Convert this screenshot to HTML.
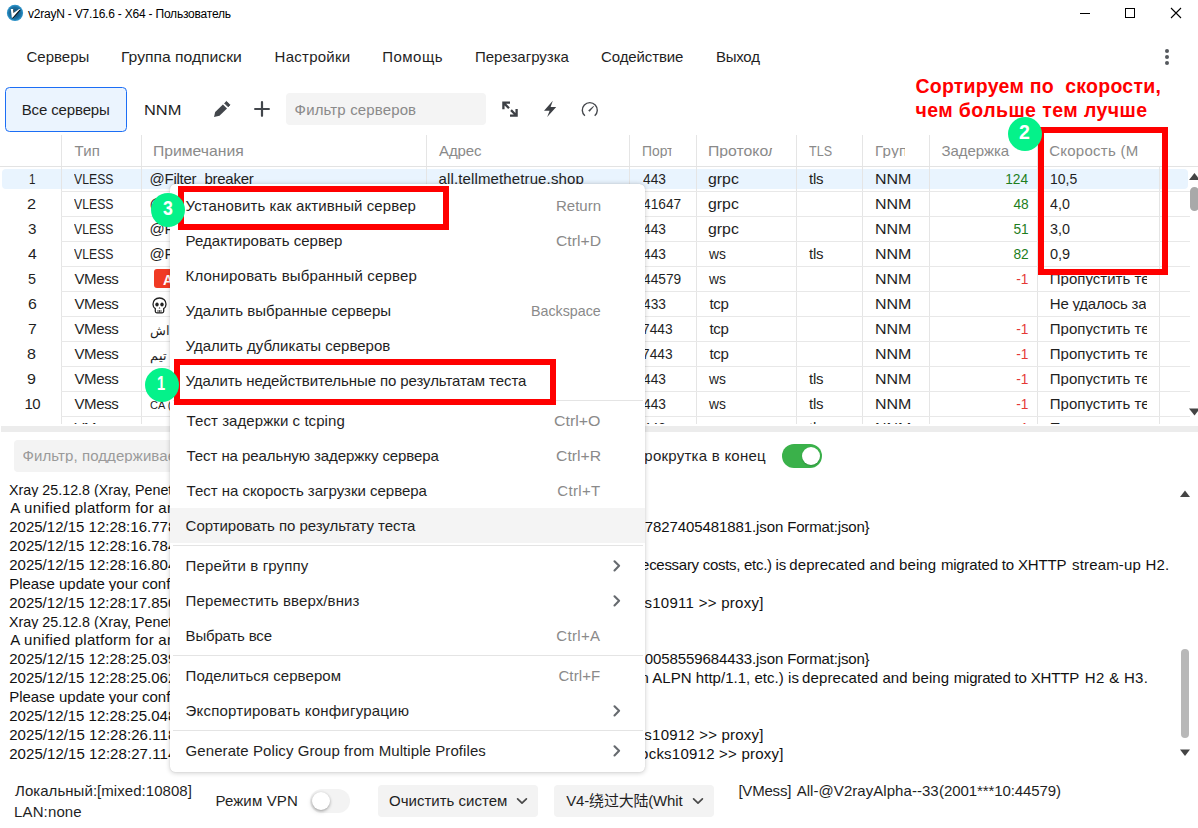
<!DOCTYPE html>
<html lang="ru"><head><meta charset="utf-8"><title>v2rayN</title>
<style>
html,body{margin:0;padding:0;background:#fff}
#app{position:relative;width:1198px;height:828px;overflow:hidden;background:#fff;font-family:"Liberation Sans", "Noto Sans CJK SC", sans-serif}
.a{position:absolute}
.t{position:absolute;white-space:pre;display:block}
</style></head><body><div id="app">
<svg class="a" style="left:0;top:0" width="30" height="26" viewBox="0 0 30 26"><circle cx="15" cy="12.9" r="8.1" fill="#2b90c6"/><circle cx="15" cy="12.9" r="7" fill="#2079ab"/><circle cx="15" cy="12.9" r="5.8" fill="#1b6a99"/><circle cx="15" cy="12.9" r="4" fill="#185d87"/><path d="M11.6 10.3 L13.9 9.6 L14.2 13.2 L19.6 9.6 L20.6 10.2 L12.9 18.4 L12.1 18.2 Z" fill="#0a0a0a"/><path d="M10.8 9.1 L13.2 9.1 L13.5 12.9 L19.2 9.1 L20.2 9.1 L12.5 17.7 L11.8 17.7 Z" fill="#fff"/></svg>
<span class="t" style="left:28.00px;top:8px;font-size:12px;line-height:12px;color:#000;letter-spacing:-0.21px">v2rayN - V7.16.6 - X64 - Пользователь</span>
<svg class="a" style="left:1075px;top:3px" width="112" height="20" viewBox="0 0 112 20" fill="none" stroke="#000" stroke-width="1" shape-rendering="crispEdges"><path d="M5 10.5 H15"/><rect x="50.5" y="5.5" width="9" height="9"/></svg>
<svg class="a" style="left:1166px;top:3px" width="20" height="20" viewBox="0 0 20 20" fill="none" stroke="#000" stroke-width="1.1"><path d="M5 5 L15 15 M15 5 L5 15"/></svg>
<span class="t" style="left:26.40px;top:49px;font-size:15px;line-height:15px;color:#1f1f1f;letter-spacing:0.03px">Серверы</span>
<span class="t" style="left:121.25px;top:49px;font-size:15px;line-height:15px;color:#1f1f1f;transform:scaleX(1.0456);transform-origin:0 50%">Группа подписки</span>
<span class="t" style="left:274.60px;top:49px;font-size:15px;line-height:15px;color:#1f1f1f;letter-spacing:0.25px">Настройки</span>
<span class="t" style="left:382.20px;top:49px;font-size:15px;line-height:15px;color:#1f1f1f;letter-spacing:0.48px">Помощь</span>
<span class="t" style="left:475.00px;top:49px;font-size:15px;line-height:15px;color:#1f1f1f">Перезагрузка</span>
<span class="t" style="left:601.00px;top:49px;font-size:15px;line-height:15px;color:#1f1f1f;letter-spacing:-0.11px">Содействие</span>
<span class="t" style="left:716.00px;top:49px;font-size:15px;line-height:15px;color:#1f1f1f;letter-spacing:-0.25px">Выход</span>
<svg class="a" style="left:1163px;top:47px" width="8" height="20" viewBox="0 0 8 20" fill="#55595e"><circle cx="4" cy="4" r="2"/><circle cx="4" cy="10" r="2"/><circle cx="4" cy="16" r="2"/></svg>
<div class="a" style="left:5px;top:87px;width:122px;height:45px;box-sizing:border-box;border:1.3px solid #1c6ef5;border-radius:4.5px;background:#ebf4fe"></div>
<span class="t" style="left:21.70px;top:102px;font-size:15px;line-height:15px;color:#1f1f1f;letter-spacing:-0.13px">Все серверы</span>
<span class="t" style="left:143.61px;top:102px;font-size:15px;line-height:15px;color:#1f1f1f;transform:scaleX(1.0938);transform-origin:0 50%">NNM</span>
<svg class="a" style="left:205px;top:92px" width="75" height="34" viewBox="205 92 75 34"><path d="M214 116.9 L215.2 112 L222.9 104.4 L227 108.5 L219.5 115.8 Z" fill="#42464b"/><path d="M224.6 103.2 L226.5 101.4 L230 104.9 L228.2 106.8 Z" fill="#42464b" stroke="#42464b" stroke-width="0.9" stroke-linejoin="round"/><path d="M262 102.2 V115.8 M255.1 109 H268.9" fill="none" stroke="#42464b" stroke-width="2.2" stroke-linecap="round"/></svg>
<div class="a" style="left:286px;top:93px;width:199.8px;height:31.6px;border-radius:4px;background:#f4f4f4"></div>
<span class="t" style="left:294.60px;top:102px;font-size:15px;line-height:15px;color:#8a8a8a;letter-spacing:0.14px">Фильтр серверов</span>
<svg class="a" style="left:495px;top:92px" width="110" height="34" viewBox="495 92 110 34"><g fill="none" stroke="#3d4045" stroke-width="2.3"><path d="M503.4 109.2 V102.6 H510 M503.4 102.6 L509 108.2 M511 110.1 L516.6 115.7 M510 115.7 H516.6 V109.1"/></g><path d="M552.8 100.8 L544 110.7 H549.6 L547.2 117 L556.2 107.1 H550.6 Z" fill="#3d4045"/><path d="M584.9 115.8 A7.5 7.5 0 1 1 594.7 115.8" fill="none" stroke="#44474c" stroke-width="1.4"/><path d="M588.2 110.4 L593.4 106 L594 106.6 L589.6 111.8 Z" fill="#44474c"/></svg>
<span class="t" style="left:915.40px;top:77px;font-size:19.5px;line-height:19.5px;color:#ff0000;font-weight:bold;letter-spacing:0.25px">Сортируем по  скорости,</span>
<span class="t" style="left:915.40px;top:101px;font-size:19.5px;line-height:19.5px;color:#ff0000;font-weight:bold;letter-spacing:0.43px">чем больше тем лучше</span>
<div class="a" id="tbl" style="left:0;top:134px;width:1198px;height:290.4px;overflow:hidden">
<div class="a" style="left:2px;top:35.0px;width:1186px;height:20px;border-radius:4px;background:#e9f4fe"></div>
<div class="a" style="left:61px;top:1px;width:1px;height:300px;background:#e5e5e5"></div>
<div class="a" style="left:141px;top:1px;width:1px;height:300px;background:#e5e5e5"></div>
<div class="a" style="left:426px;top:1px;width:1px;height:300px;background:#e5e5e5"></div>
<div class="a" style="left:629px;top:1px;width:1px;height:300px;background:#e5e5e5"></div>
<div class="a" style="left:696px;top:1px;width:1px;height:300px;background:#e5e5e5"></div>
<div class="a" style="left:796px;top:1px;width:1px;height:300px;background:#e5e5e5"></div>
<div class="a" style="left:862px;top:1px;width:1px;height:300px;background:#e5e5e5"></div>
<div class="a" style="left:929px;top:1px;width:1px;height:300px;background:#e5e5e5"></div>
<div class="a" style="left:1037px;top:1px;width:1px;height:300px;background:#e5e5e5"></div>
<div class="a" style="left:1159px;top:32px;width:1px;height:300px;background:#e5e5e5"></div>
<div class="a" style="left:0;top:32px;width:1198px;height:1px;background:#e3e3e3"></div>
<div class="a" style="left:61px;top:57.0px;width:1129px;height:1px;background:#e8e8e8"></div>
<div class="a" style="left:61px;top:82.0px;width:1129px;height:1px;background:#e8e8e8"></div>
<div class="a" style="left:61px;top:107.0px;width:1129px;height:1px;background:#e8e8e8"></div>
<div class="a" style="left:61px;top:132.0px;width:1129px;height:1px;background:#e8e8e8"></div>
<div class="a" style="left:61px;top:157.0px;width:1129px;height:1px;background:#e8e8e8"></div>
<div class="a" style="left:61px;top:182.0px;width:1129px;height:1px;background:#e8e8e8"></div>
<div class="a" style="left:61px;top:207.0px;width:1129px;height:1px;background:#e8e8e8"></div>
<div class="a" style="left:61px;top:232.0px;width:1129px;height:1px;background:#e8e8e8"></div>
<div class="a" style="left:61px;top:257.0px;width:1129px;height:1px;background:#e8e8e8"></div>
<div class="a" style="left:61px;top:282.0px;width:1129px;height:1px;background:#e8e8e8"></div>
<span class="t" style="left:74.40px;top:9px;font-size:15px;line-height:15px;color:#8a8a8a;letter-spacing:0.30px">Тип</span>
<span class="t" style="left:152.95px;top:9px;font-size:15px;line-height:15px;color:#8a8a8a;transform:scaleX(1.0471);transform-origin:0 50%">Примечания</span>
<span class="t" style="left:439.00px;top:9px;font-size:15px;line-height:15px;color:#8a8a8a;letter-spacing:-0.12px">Адрес</span>
<span class="t" style="left:641.68px;top:9px;font-size:15px;line-height:15px;color:#8a8a8a;transform:scaleX(0.9231);transform-origin:0 50%;width:32.0px;overflow:hidden">Порт</span>
<span class="t" style="left:708.35px;top:9px;font-size:15px;line-height:15px;color:#8a8a8a;transform:scaleX(1.0518);transform-origin:0 50%;width:60.7px;overflow:hidden">Протокол</span>
<span class="t" style="left:809.00px;top:9px;font-size:15px;line-height:15px;color:#8a8a8a;transform:scaleX(0.8370);transform-origin:0 50%">TLS</span>
<span class="t" style="left:874.90px;top:9px;font-size:15px;line-height:15px;color:#8a8a8a;letter-spacing:0.40px;width:30.1px;overflow:hidden">Группа</span>
<span class="t" style="left:941.60px;top:9px;font-size:15px;line-height:15px;color:#8a8a8a;letter-spacing:-0.09px">Задержка</span>
<span class="t" style="left:1049.20px;top:9px;font-size:15px;line-height:15px;color:#8a8a8a;letter-spacing:0.25px">Скорость (М</span>
<span class="t" style="left:28.83px;top:37px;font-size:15px;line-height:15px;color:#1f1f1f;transform:scaleX(0.7714);transform-origin:0 50%">1</span>
<span class="t" style="left:74.40px;top:37px;font-size:15px;line-height:15px;color:#1f1f1f;transform:scaleX(0.8167);transform-origin:0 50%">VLESS</span>
<span class="t" style="left:149.50px;top:37px;font-size:15px;line-height:15px;color:#1f1f1f;letter-spacing:-0.25px">@Filter_breaker</span>
<span class="t" style="left:438.50px;top:37px;font-size:15px;line-height:15px;color:#1f1f1f;letter-spacing:0.13px">all.tellmethetrue.shop</span>
<span class="t" style="left:642.60px;top:37px;font-size:15px;line-height:15px;color:#1f1f1f;transform:scaleX(0.9150);transform-origin:0 50%">443</span>
<span class="t" style="left:708.34px;top:37px;font-size:15px;line-height:15px;color:#1f1f1f;transform:scaleX(1.0571);transform-origin:0 50%">grpc</span>
<span class="t" style="left:809.00px;top:37px;font-size:15px;line-height:15px;color:#1f1f1f;letter-spacing:-0.20px">tls</span>
<span class="t" style="left:874.83px;top:37px;font-size:15px;line-height:15px;color:#1f1f1f;transform:scaleX(1.0656);transform-origin:0 50%">NNM</span>
<span class="t" style="right:169.57px;top:37px;font-size:15px;line-height:15px;color:#1e7e1e;transform:scaleX(0.9150);transform-origin:100% 50%">124</span>
<span class="t" style="left:1050.17px;top:37px;font-size:15px;line-height:15px;color:#1f1f1f;transform:scaleX(0.9321);transform-origin:0 50%">10,5</span>
<span class="t" style="left:27.31px;top:62px;font-size:15px;line-height:15px;color:#1f1f1f;transform:scaleX(1.0857);transform-origin:0 50%">2</span>
<span class="t" style="left:74.40px;top:62px;font-size:15px;line-height:15px;color:#1f1f1f;transform:scaleX(0.8167);transform-origin:0 50%">VLESS</span>
<span class="t" style="left:149.50px;top:62px;font-size:15px;line-height:15px;color:#1f1f1f;letter-spacing:-0.25px">@Filter_breaker</span>
<span class="t" style="left:438.50px;top:62px;font-size:15px;line-height:15px;color:#1f1f1f">speed.tellmethetrue.shop</span>
<span class="t" style="left:642.60px;top:62px;font-size:15px;line-height:15px;color:#1f1f1f;transform:scaleX(0.9150);transform-origin:0 50%">41647</span>
<span class="t" style="left:708.34px;top:62px;font-size:15px;line-height:15px;color:#1f1f1f;transform:scaleX(1.0571);transform-origin:0 50%">grpc</span>
<span class="t" style="left:874.83px;top:62px;font-size:15px;line-height:15px;color:#1f1f1f;transform:scaleX(1.0656);transform-origin:0 50%">NNM</span>
<span class="t" style="right:168.97px;top:62px;font-size:15px;line-height:15px;color:#1e7e1e;transform:scaleX(0.9150);transform-origin:100% 50%">48</span>
<span class="t" style="left:1050.30px;top:62px;font-size:15px;line-height:15px;color:#1f1f1f;transform:scaleX(0.9500);transform-origin:0 50%">4,0</span>
<span class="t" style="left:27.59px;top:87px;font-size:15px;line-height:15px;color:#1f1f1f;transform:scaleX(1.0143);transform-origin:0 50%">3</span>
<span class="t" style="left:74.40px;top:87px;font-size:15px;line-height:15px;color:#1f1f1f;transform:scaleX(0.8167);transform-origin:0 50%">VLESS</span>
<span class="t" style="left:149.50px;top:87px;font-size:15px;line-height:15px;color:#1f1f1f;letter-spacing:-0.25px">@Filter_breaker</span>
<span class="t" style="left:439.50px;top:87px;font-size:15px;line-height:15px;color:#1f1f1f">fast.tellmethetrue.shop</span>
<span class="t" style="left:642.60px;top:87px;font-size:15px;line-height:15px;color:#1f1f1f;transform:scaleX(0.9150);transform-origin:0 50%">443</span>
<span class="t" style="left:708.34px;top:87px;font-size:15px;line-height:15px;color:#1f1f1f;transform:scaleX(1.0571);transform-origin:0 50%">grpc</span>
<span class="t" style="left:874.83px;top:87px;font-size:15px;line-height:15px;color:#1f1f1f;transform:scaleX(1.0656);transform-origin:0 50%">NNM</span>
<span class="t" style="right:168.97px;top:87px;font-size:15px;line-height:15px;color:#1e7e1e;transform:scaleX(0.9150);transform-origin:100% 50%">51</span>
<span class="t" style="left:1050.14px;top:87px;font-size:15px;line-height:15px;color:#1f1f1f;transform:scaleX(0.9579);transform-origin:0 50%">3,0</span>
<span class="t" style="left:28.00px;top:112px;font-size:15px;line-height:15px;color:#1f1f1f;transform:scaleX(1.0500);transform-origin:0 50%">4</span>
<span class="t" style="left:74.40px;top:112px;font-size:15px;line-height:15px;color:#1f1f1f;transform:scaleX(0.8167);transform-origin:0 50%">VLESS</span>
<span class="t" style="left:149.50px;top:112px;font-size:15px;line-height:15px;color:#1f1f1f;letter-spacing:-0.25px">@Filter_breaker</span>
<span class="t" style="left:438.50px;top:112px;font-size:15px;line-height:15px;color:#1f1f1f">cdn.tellmethetrue.shop</span>
<span class="t" style="left:642.60px;top:112px;font-size:15px;line-height:15px;color:#1f1f1f;transform:scaleX(0.9150);transform-origin:0 50%">443</span>
<span class="t" style="left:709.40px;top:112px;font-size:15px;line-height:15px;color:#1f1f1f;transform:scaleX(0.9222);transform-origin:0 50%">ws</span>
<span class="t" style="left:809.00px;top:112px;font-size:15px;line-height:15px;color:#1f1f1f;letter-spacing:-0.20px">tls</span>
<span class="t" style="left:874.83px;top:112px;font-size:15px;line-height:15px;color:#1f1f1f;transform:scaleX(1.0656);transform-origin:0 50%">NNM</span>
<span class="t" style="right:168.97px;top:112px;font-size:15px;line-height:15px;color:#1e7e1e;transform:scaleX(0.9150);transform-origin:100% 50%">82</span>
<span class="t" style="left:1049.93px;top:112px;font-size:15px;line-height:15px;color:#1f1f1f;transform:scaleX(0.9684);transform-origin:0 50%">0,9</span>
<span class="t" style="left:28.04px;top:137px;font-size:15px;line-height:15px;color:#1f1f1f;transform:scaleX(0.9571);transform-origin:0 50%">5</span>
<span class="t" style="left:74.40px;top:137px;font-size:15px;line-height:15px;color:#1f1f1f;letter-spacing:-0.35px">VMess</span>
<span class="t" style="left:438.50px;top:137px;font-size:15px;line-height:15px;color:#1f1f1f">2001:bc8:32d7:302::10</span>
<span class="t" style="left:642.60px;top:137px;font-size:15px;line-height:15px;color:#1f1f1f;transform:scaleX(0.9150);transform-origin:0 50%">44579</span>
<span class="t" style="left:709.40px;top:137px;font-size:15px;line-height:15px;color:#1f1f1f;transform:scaleX(0.9222);transform-origin:0 50%">ws</span>
<span class="t" style="left:874.83px;top:137px;font-size:15px;line-height:15px;color:#1f1f1f;transform:scaleX(1.0656);transform-origin:0 50%">NNM</span>
<span class="t" style="right:169.29px;top:137px;font-size:15px;line-height:15px;color:#e53935;transform:scaleX(0.9150);transform-origin:100% 50%">-1</span>
<span class="t" style="left:1049.80px;top:137px;font-size:15px;line-height:15px;color:#1f1f1f;letter-spacing:0.01px;width:97.0px;overflow:hidden">Пропустить тест</span>
<span class="t" style="left:27.54px;top:162px;font-size:15px;line-height:15px;color:#1f1f1f;transform:scaleX(1.0571);transform-origin:0 50%">6</span>
<span class="t" style="left:74.40px;top:162px;font-size:15px;line-height:15px;color:#1f1f1f;letter-spacing:-0.35px">VMess</span>
<span class="t" style="left:438.50px;top:162px;font-size:15px;line-height:15px;color:#1f1f1f">51.158.200.132</span>
<span class="t" style="left:642.60px;top:162px;font-size:15px;line-height:15px;color:#1f1f1f;transform:scaleX(0.9150);transform-origin:0 50%">433</span>
<span class="t" style="left:709.40px;top:162px;font-size:15px;line-height:15px;color:#1f1f1f;letter-spacing:-0.30px">tcp</span>
<span class="t" style="left:874.83px;top:162px;font-size:15px;line-height:15px;color:#1f1f1f;transform:scaleX(1.0656);transform-origin:0 50%">NNM</span>
<span class="t" style="left:1049.80px;top:162px;font-size:15px;line-height:15px;color:#1f1f1f;letter-spacing:-0.22px;width:96.7px;overflow:hidden">Не удалось запустить</span>
<span class="t" style="left:27.54px;top:187px;font-size:15px;line-height:15px;color:#1f1f1f;transform:scaleX(1.0571);transform-origin:0 50%">7</span>
<span class="t" style="left:74.40px;top:187px;font-size:15px;line-height:15px;color:#1f1f1f;letter-spacing:-0.35px">VMess</span>
<span class="t" style="left:438.50px;top:187px;font-size:15px;line-height:15px;color:#1f1f1f">193.123.81.105</span>
<span class="t" style="left:641.69px;top:187px;font-size:15px;line-height:15px;color:#1f1f1f;transform:scaleX(0.9150);transform-origin:0 50%">7443</span>
<span class="t" style="left:709.40px;top:187px;font-size:15px;line-height:15px;color:#1f1f1f;letter-spacing:-0.30px">tcp</span>
<span class="t" style="left:874.83px;top:187px;font-size:15px;line-height:15px;color:#1f1f1f;transform:scaleX(1.0656);transform-origin:0 50%">NNM</span>
<span class="t" style="right:169.29px;top:187px;font-size:15px;line-height:15px;color:#e53935;transform:scaleX(0.9150);transform-origin:100% 50%">-1</span>
<span class="t" style="left:1049.80px;top:187px;font-size:15px;line-height:15px;color:#1f1f1f;letter-spacing:0.01px;width:97.0px;overflow:hidden">Пропустить тест</span>
<span class="t" style="left:27.43px;top:212px;font-size:15px;line-height:15px;color:#1f1f1f;transform:scaleX(1.0714);transform-origin:0 50%">8</span>
<span class="t" style="left:74.40px;top:212px;font-size:15px;line-height:15px;color:#1f1f1f;letter-spacing:-0.35px">VMess</span>
<span class="t" style="left:438.50px;top:212px;font-size:15px;line-height:15px;color:#1f1f1f">193.123.81.105</span>
<span class="t" style="left:641.69px;top:212px;font-size:15px;line-height:15px;color:#1f1f1f;transform:scaleX(0.9150);transform-origin:0 50%">7443</span>
<span class="t" style="left:709.40px;top:212px;font-size:15px;line-height:15px;color:#1f1f1f;letter-spacing:-0.30px">tcp</span>
<span class="t" style="left:874.83px;top:212px;font-size:15px;line-height:15px;color:#1f1f1f;transform:scaleX(1.0656);transform-origin:0 50%">NNM</span>
<span class="t" style="right:169.29px;top:212px;font-size:15px;line-height:15px;color:#e53935;transform:scaleX(0.9150);transform-origin:100% 50%">-1</span>
<span class="t" style="left:1049.80px;top:212px;font-size:15px;line-height:15px;color:#1f1f1f;letter-spacing:0.01px;width:97.0px;overflow:hidden">Пропустить тест</span>
<span class="t" style="left:27.43px;top:237px;font-size:15px;line-height:15px;color:#1f1f1f;transform:scaleX(1.0714);transform-origin:0 50%">9</span>
<span class="t" style="left:74.40px;top:237px;font-size:15px;line-height:15px;color:#1f1f1f;letter-spacing:-0.35px">VMess</span>
<span class="t" style="left:438.50px;top:237px;font-size:15px;line-height:15px;color:#1f1f1f">ca.v2rayalpha.shop</span>
<span class="t" style="left:642.60px;top:237px;font-size:15px;line-height:15px;color:#1f1f1f;transform:scaleX(0.9150);transform-origin:0 50%">443</span>
<span class="t" style="left:709.40px;top:237px;font-size:15px;line-height:15px;color:#1f1f1f;transform:scaleX(0.9222);transform-origin:0 50%">ws</span>
<span class="t" style="left:809.00px;top:237px;font-size:15px;line-height:15px;color:#1f1f1f;letter-spacing:-0.20px">tls</span>
<span class="t" style="left:874.83px;top:237px;font-size:15px;line-height:15px;color:#1f1f1f;transform:scaleX(1.0656);transform-origin:0 50%">NNM</span>
<span class="t" style="right:169.29px;top:237px;font-size:15px;line-height:15px;color:#e53935;transform:scaleX(0.9150);transform-origin:100% 50%">-1</span>
<span class="t" style="left:1049.80px;top:237px;font-size:15px;line-height:15px;color:#1f1f1f;letter-spacing:0.01px;width:97.0px;overflow:hidden">Пропустить тест</span>
<span class="t" style="left:24.60px;top:262px;font-size:15px;line-height:15px;color:#1f1f1f;letter-spacing:-0.60px">10</span>
<span class="t" style="left:74.40px;top:262px;font-size:15px;line-height:15px;color:#1f1f1f;letter-spacing:-0.35px">VMess</span>
<span class="t" style="left:438.50px;top:262px;font-size:15px;line-height:15px;color:#1f1f1f">ca.v2rayalpha.shop</span>
<span class="t" style="left:642.60px;top:262px;font-size:15px;line-height:15px;color:#1f1f1f;transform:scaleX(0.9150);transform-origin:0 50%">443</span>
<span class="t" style="left:709.40px;top:262px;font-size:15px;line-height:15px;color:#1f1f1f;transform:scaleX(0.9222);transform-origin:0 50%">ws</span>
<span class="t" style="left:809.00px;top:262px;font-size:15px;line-height:15px;color:#1f1f1f;letter-spacing:-0.20px">tls</span>
<span class="t" style="left:874.83px;top:262px;font-size:15px;line-height:15px;color:#1f1f1f;transform:scaleX(1.0656);transform-origin:0 50%">NNM</span>
<span class="t" style="right:169.29px;top:262px;font-size:15px;line-height:15px;color:#e53935;transform:scaleX(0.9150);transform-origin:100% 50%">-1</span>
<span class="t" style="left:1049.80px;top:262px;font-size:15px;line-height:15px;color:#1f1f1f;letter-spacing:0.01px;width:97.0px;overflow:hidden">Пропустить тест</span>
<span class="t" style="left:74.40px;top:286px;font-size:15px;line-height:15px;color:#1f1f1f;letter-spacing:-0.35px">VMess</span>
<span class="t" style="left:438.50px;top:286px;font-size:15px;line-height:15px;color:#1f1f1f">de.v2rayalpha.shop</span>
<span class="t" style="left:642.60px;top:286px;font-size:15px;line-height:15px;color:#1f1f1f;transform:scaleX(0.9150);transform-origin:0 50%">443</span>
<span class="t" style="left:709.40px;top:286px;font-size:15px;line-height:15px;color:#1f1f1f;transform:scaleX(0.9222);transform-origin:0 50%">ws</span>
<span class="t" style="left:809.00px;top:286px;font-size:15px;line-height:15px;color:#1f1f1f;letter-spacing:-0.20px">tls</span>
<span class="t" style="left:874.83px;top:286px;font-size:15px;line-height:15px;color:#1f1f1f;transform:scaleX(1.0656);transform-origin:0 50%">NNM</span>
<span class="t" style="right:169.29px;top:286px;font-size:15px;line-height:15px;color:#e53935;transform:scaleX(0.9150);transform-origin:100% 50%">-1</span>
<span class="t" style="left:1049.80px;top:286px;font-size:15px;line-height:15px;color:#1f1f1f;letter-spacing:0.01px;width:97.0px;overflow:hidden">Пропустить тест</span>
</div>
<div class="a" style="left:154px;top:269.3px;width:30px;height:19px;border-radius:3px;background:#f03a24"></div>
<span class="t" style="left:163.00px;top:273px;font-size:14px;line-height:14px;color:#fff;font-weight:bold">A</span>
<svg class="a" style="left:151.5px;top:297px" width="15" height="17" viewBox="0 0 15 17"><path d="M7.5 1 C3.5 1 1 3.8 1 7.2 C1 9.4 2 10.8 3.3 11.6 V14.3 C3.3 15.2 4 15.8 4.8 15.8 H10.2 C11 15.8 11.7 15.2 11.7 14.3 V11.6 C13 10.8 14 9.4 14 7.2 C14 3.8 11.5 1 7.5 1 Z" fill="#fff" stroke="#222" stroke-width="1.3"/><ellipse cx="5" cy="7.6" rx="1.7" ry="2" fill="#222"/><ellipse cx="10" cy="7.6" rx="1.7" ry="2" fill="#222"/><path d="M7.5 10 L6.7 11.6 H8.3 Z" fill="#222"/><path d="M6 13 V15.5 M7.5 13 V15.5 M9 13 V15.5" stroke="#222" stroke-width="0.8"/></svg>
<span class="t" style="left:150.00px;top:324px;font-size:13px;line-height:13px;color:#1f1f1f;font-family:"DejaVu Sans", sans-serif">اش</span>
<span class="t" style="left:150.00px;top:349px;font-size:13px;line-height:13px;color:#1f1f1f;font-family:"DejaVu Sans", sans-serif">تیم</span>
<span class="t" style="left:150.00px;top:400px;font-size:11px;line-height:11px;color:#1f1f1f">CA (</span>
<svg class="a" style="left:1189px;top:173px" width="9" height="8" viewBox="0 0 9 8"><path d="M0 7 L5.5 0 L11 7 Z" fill="#444"/></svg>
<div class="a" style="left:1190px;top:187px;width:9px;height:24px;border-radius:4.5px;background:#a9a9a9"></div>
<svg class="a" style="left:1189px;top:408px" width="9" height="8" viewBox="0 0 9 8"><path d="M0 0.5 L11 0.5 L5.5 7.5 Z" fill="#444"/></svg>
<div class="a" style="left:1px;top:426px;width:1197px;height:6px;background:#ececec"></div>
<div class="a" style="left:14px;top:440px;width:400px;height:32px;border-radius:4px;background:#f3f3f3"></div>
<span class="t" style="left:22.60px;top:448px;font-size:15px;line-height:15px;color:#9a9a9a;letter-spacing:0.08px;width:160.0px;overflow:hidden">Фильтр, поддерживает регулярные</span>
<span class="t" style="left:633.27px;top:448px;font-size:15px;line-height:15px;color:#1f1f1f;letter-spacing:0.25px">Прокрутка в конец</span>
<div class="a" style="left:781.6px;top:444px;width:40px;height:23.8px;border-radius:12px;background:#3ab14a"></div>
<div class="a" style="left:801.8px;top:447px;width:18.3px;height:18.3px;border-radius:50%;background:#fff;box-shadow:0 1px 1.5px rgba(0,0,0,.18)"></div>
<span class="t" style="left:9.25px;top:482px;font-size:15px;line-height:15px;color:#111;transform:scaleX(0.9524);transform-origin:0 50%;width:170.0px;overflow:hidden">Xray 25.12.8 (Xray, Penetrates Everything.) 5d2c1f3 (go1.25.5 windows/amd64)</span>
<span class="t" style="left:10.20px;top:500px;font-size:15px;line-height:15px;color:#111;letter-spacing:0.28px;width:170.0px;overflow:hidden">A unified platform for anti-censorship.</span>
<span class="t" style="left:9.20px;top:519px;font-size:15px;line-height:15px;color:#111;letter-spacing:0.01px;width:170.0px;overflow:hidden">2025/12/15 12:28:16.778 [Info] infra/conf/serial: Reading config: &amp;{Name:</span>
<span class="t" style="left:644.80px;top:519px;font-size:15px;line-height:15px;color:#111;letter-spacing:-0.10px">7827405481881.json </span>
<span class="t" style="left:787.20px;top:519px;font-size:15px;line-height:15px;color:#111;letter-spacing:-0.16px">Format:json}</span>
<span class="t" style="left:9.20px;top:538px;font-size:15px;line-height:15px;color:#111;letter-spacing:0.01px;width:170.0px;overflow:hidden">2025/12/15 12:28:16.784 [Warning] core: Xray 25.12.8 started</span>
<span class="t" style="left:9.20px;top:557px;font-size:15px;line-height:15px;color:#111;letter-spacing:0.01px;width:170.0px;overflow:hidden">2025/12/15 12:28:16.804 [Warning] common/errors: The feature VLESS</span>
<span class="t" style="left:616.94px;top:557px;font-size:15px;line-height:15px;color:#111;letter-spacing:-0.29px">unnecessary costs, etc.) is </span>
<span class="t" style="left:789.30px;top:557px;font-size:15px;line-height:15px;color:#111;letter-spacing:0.09px">deprecated and being </span>
<span class="t" style="left:940.90px;top:557px;font-size:15px;line-height:15px;color:#111;letter-spacing:-0.18px">migrated to XHTTP </span>
<span class="t" style="left:1072.00px;top:557px;font-size:15px;line-height:15px;color:#111;letter-spacing:0.17px">stream-up H2.</span>
<span class="t" style="left:9.20px;top:576px;font-size:15px;line-height:15px;color:#111;letter-spacing:-0.03px;width:170.0px;overflow:hidden">Please update your config(s) according to release note and docs</span>
<span class="t" style="left:9.20px;top:595px;font-size:15px;line-height:15px;color:#111;letter-spacing:0.01px;width:170.0px;overflow:hidden">2025/12/15 12:28:17.850 [Info] app/dispatcher: taking detour</span>
<span class="t" style="left:612.44px;top:595px;font-size:15px;line-height:15px;color:#111;letter-spacing:0.28px">socks10911 &gt;&gt; proxy]</span>
<span class="t" style="left:9.25px;top:614px;font-size:15px;line-height:15px;color:#111;transform:scaleX(0.9524);transform-origin:0 50%;width:170.0px;overflow:hidden">Xray 25.12.8 (Xray, Penetrates Everything.) 5d2c1f3 (go1.25.5 windows/amd64)</span>
<span class="t" style="left:10.20px;top:632px;font-size:15px;line-height:15px;color:#111;letter-spacing:0.28px;width:170.0px;overflow:hidden">A unified platform for anti-censorship.</span>
<span class="t" style="left:9.20px;top:651px;font-size:15px;line-height:15px;color:#111;letter-spacing:0.01px;width:170.0px;overflow:hidden">2025/12/15 12:28:25.039 [Info] infra/conf/serial: Reading config: &amp;{Name:</span>
<span class="t" style="left:644.80px;top:651px;font-size:15px;line-height:15px;color:#111;letter-spacing:-0.10px">0058559684433.json </span>
<span class="t" style="left:787.20px;top:651px;font-size:15px;line-height:15px;color:#111;letter-spacing:-0.16px">Format:json}</span>
<span class="t" style="left:9.20px;top:670px;font-size:15px;line-height:15px;color:#111;letter-spacing:0.01px;width:170.0px;overflow:hidden">2025/12/15 12:28:25.062 [Warning] common/errors: The feature HTTP</span>
<span class="t" style="left:637.22px;top:670px;font-size:15px;line-height:15px;color:#111;letter-spacing:0.03px">in ALPN http/1.1, etc.) is </span>
<span class="t" style="left:802.10px;top:670px;font-size:15px;line-height:15px;color:#111;letter-spacing:0.10px">deprecated and being </span>
<span class="t" style="left:953.70px;top:670px;font-size:15px;line-height:15px;color:#111;letter-spacing:-0.18px">migrated to XHTTP </span>
<span class="t" style="left:1084.80px;top:670px;font-size:15px;line-height:15px;color:#111;letter-spacing:0.33px">H2 &amp; H3.</span>
<span class="t" style="left:9.20px;top:689px;font-size:15px;line-height:15px;color:#111;letter-spacing:-0.03px;width:170.0px;overflow:hidden">Please update your config(s) according to release note and docs</span>
<span class="t" style="left:9.20px;top:708px;font-size:15px;line-height:15px;color:#111;letter-spacing:0.01px;width:170.0px;overflow:hidden">2025/12/15 12:28:25.048 [Warning] core: Xray 25.12.8 started</span>
<span class="t" style="left:9.20px;top:727px;font-size:15px;line-height:15px;color:#111;letter-spacing:0.06px;width:170.0px;overflow:hidden">2025/12/15 12:28:26.118 [Info] app/dispatcher: taking detour</span>
<span class="t" style="left:612.70px;top:727px;font-size:15px;line-height:15px;color:#111;letter-spacing:0.21px">socks10912 &gt;&gt; proxy]</span>
<span class="t" style="left:9.20px;top:746px;font-size:15px;line-height:15px;color:#111;letter-spacing:0.06px;width:170.0px;overflow:hidden">2025/12/15 12:28:27.114 [Info] app/dispatcher: taking detour</span>
<span class="t" style="left:632.37px;top:746px;font-size:15px;line-height:15px;color:#111;letter-spacing:0.23px">socks10912 &gt;&gt; proxy]</span>
<svg class="a" style="left:1180px;top:490px" width="10" height="8" viewBox="0 0 10 8"><path d="M0 7 L5 0.5 L10 7 Z" fill="#444"/></svg>
<div class="a" style="left:1181px;top:649px;width:8.4px;height:88.6px;border-radius:4.2px;background:#b8b8b8"></div>
<svg class="a" style="left:1180px;top:749px" width="10" height="8" viewBox="0 0 10 8"><path d="M0 0.5 L10 0.5 L5 7 Z" fill="#444"/></svg>
<span class="t" style="left:15.00px;top:783px;font-size:15px;line-height:15px;color:#1f1f1f;letter-spacing:0.05px">Локальный:[mixed:10808]</span>
<span class="t" style="left:14.00px;top:804px;font-size:15px;line-height:15px;color:#1f1f1f;letter-spacing:0.14px">LAN:none</span>
<span class="t" style="left:215.40px;top:793px;font-size:15px;line-height:15px;color:#1f1f1f;letter-spacing:0.14px">Режим VPN</span>
<div class="a" style="left:310.2px;top:789.2px;width:39.8px;height:23.8px;border-radius:12px;background:#f3f3f3"></div>
<div class="a" style="left:311.7px;top:791.5px;width:18.8px;height:18.8px;border-radius:50%;background:#fff;box-shadow:0 1px 3px rgba(0,0,0,.3),-1px 2px 5px rgba(0,0,0,.1)"></div>
<div class="a" style="left:378.4px;top:785px;width:159.2px;height:31.8px;border-radius:4px;background:#f3f3f3"></div>
<span class="t" style="left:389.00px;top:793px;font-size:15px;line-height:15px;color:#1f1f1f;letter-spacing:0.01px">Очистить систем</span>
<svg class="a" style="left:516px;top:796px" width="12" height="10" viewBox="0 0 12 10" fill="none" stroke="#4a4a4a" stroke-width="1.7" stroke-linecap="round" stroke-linejoin="round"><path d="M1.6 2.8 L6 7.2 L10.4 2.8"/></svg>
<div class="a" style="left:554.3px;top:785px;width:159.7px;height:31.8px;border-radius:4px;background:#f3f3f3"></div>
<span class="t" style="left:566.30px;top:793px;font-size:15px;line-height:15px;color:#1f1f1f;letter-spacing:-0.19px">V4-绕过大陆(Whit</span>
<svg class="a" style="left:692px;top:796px" width="12" height="10" viewBox="0 0 12 10" fill="none" stroke="#4a4a4a" stroke-width="1.7" stroke-linecap="round" stroke-linejoin="round"><path d="M1.6 2.8 L6 7.2 L10.4 2.8"/></svg>
<span class="t" style="left:738.40px;top:783px;font-size:15px;line-height:15px;color:#1f1f1f;letter-spacing:-0.20px">[VMess] </span>
<span class="t" style="left:796.70px;top:783px;font-size:15px;line-height:15px;color:#1f1f1f;letter-spacing:0.05px">All-@V2rayAlpha--33</span>
<span class="t" style="left:939.00px;top:783px;font-size:15px;line-height:15px;color:#1f1f1f;letter-spacing:-0.09px">(2001***10:44579)</span>
<div class="a" id="menu" style="left:169.6px;top:183.6px;width:475.6px;height:588px;border-radius:5.5px;background:#fff;box-shadow:0 0.5px 5px rgba(0,0,0,.2),0 0 1px rgba(0,0,0,.18);z-index:10"></div>
<div class="a" style="left:169.6px;top:508px;width:475.6px;height:35px;background:#f4f4f4;z-index:11"></div>
<div class="a" style="left:172.6px;top:400.0px;width:470px;height:1px;background:#e4e4e4;z-index:11"></div>
<div class="a" style="left:172.6px;top:545.0px;width:470px;height:1px;background:#e4e4e4;z-index:11"></div>
<div class="a" style="left:172.6px;top:655.0px;width:470px;height:1px;background:#e4e4e4;z-index:11"></div>
<div class="a" style="left:172.6px;top:730.0px;width:470px;height:1px;background:#e4e4e4;z-index:11"></div>
<span class="t" style="left:185.60px;top:198px;font-size:15px;line-height:15px;color:#1f1f1f;z-index:12;letter-spacing:0.10px">Установить как активный сервер</span>
<span class="t" style="left:556.00px;top:198px;font-size:15px;line-height:15px;color:#8a8a8a;z-index:12">Return</span>
<span class="t" style="left:185.60px;top:233px;font-size:15px;line-height:15px;color:#1f1f1f;z-index:12;letter-spacing:0.02px">Редактировать сервер</span>
<span class="t" style="left:555.95px;top:233px;font-size:15px;line-height:15px;color:#8a8a8a;z-index:12;transform:scaleX(1.0488);transform-origin:0 50%">Ctrl+D</span>
<span class="t" style="left:185.60px;top:268px;font-size:15px;line-height:15px;color:#1f1f1f;z-index:12;letter-spacing:0.17px">Клонировать выбранный сервер</span>
<span class="t" style="left:185.60px;top:303px;font-size:15px;line-height:15px;color:#1f1f1f;z-index:12;letter-spacing:0.03px">Удалить выбранные серверы</span>
<span class="t" style="left:530.55px;top:303px;font-size:15px;line-height:15px;color:#8a8a8a;z-index:12;transform:scaleX(0.9514);transform-origin:0 50%">Backspace</span>
<span class="t" style="left:185.60px;top:338px;font-size:15px;line-height:15px;color:#1f1f1f;z-index:12">Удалить дубликаты серверов</span>
<span class="t" style="left:185.60px;top:373px;font-size:15px;line-height:15px;color:#1f1f1f;z-index:12;letter-spacing:-0.09px">Удалить недействительные по результатам теста</span>
<span class="t" style="left:186.60px;top:413px;font-size:15px;line-height:15px;color:#1f1f1f;z-index:12;letter-spacing:0.07px">Тест задержки с tcping</span>
<span class="t" style="left:554.34px;top:413px;font-size:15px;line-height:15px;color:#8a8a8a;z-index:12;transform:scaleX(1.0619);transform-origin:0 50%">Ctrl+O</span>
<span class="t" style="left:186.60px;top:448px;font-size:15px;line-height:15px;color:#1f1f1f;z-index:12;letter-spacing:-0.08px">Тест на реальную задержку сервера</span>
<span class="t" style="left:555.85px;top:448px;font-size:15px;line-height:15px;color:#8a8a8a;z-index:12;transform:scaleX(1.0512);transform-origin:0 50%">Ctrl+R</span>
<span class="t" style="left:186.60px;top:483px;font-size:15px;line-height:15px;color:#1f1f1f;z-index:12;letter-spacing:-0.02px">Тест на скорость загрузки сервера</span>
<span class="t" style="left:557.30px;top:483px;font-size:15px;line-height:15px;color:#8a8a8a;z-index:12;letter-spacing:0.34px">Ctrl+T</span>
<span class="t" style="left:185.60px;top:518px;font-size:15px;line-height:15px;color:#1f1f1f;z-index:12;letter-spacing:-0.04px">Сортировать по результату теста</span>
<span class="t" style="left:185.60px;top:558px;font-size:15px;line-height:15px;color:#1f1f1f;z-index:12;letter-spacing:0.13px">Перейти в группу</span>
<svg class="a" style="left:611px;top:558.5px;z-index:12" width="10" height="14" viewBox="0 0 10 14" fill="none" stroke="#666a6f" stroke-width="2.1" stroke-linecap="round" stroke-linejoin="round"><path d="M3.5 2.3 L8.1 6.85 L3.5 11.4"/></svg>
<span class="t" style="left:185.60px;top:593px;font-size:15px;line-height:15px;color:#1f1f1f;z-index:12;letter-spacing:0.11px">Переместить вверх/вниз</span>
<svg class="a" style="left:611px;top:593.5px;z-index:12" width="10" height="14" viewBox="0 0 10 14" fill="none" stroke="#666a6f" stroke-width="2.1" stroke-linecap="round" stroke-linejoin="round"><path d="M3.5 2.3 L8.1 6.85 L3.5 11.4"/></svg>
<span class="t" style="left:185.60px;top:628px;font-size:15px;line-height:15px;color:#1f1f1f;z-index:12;letter-spacing:-0.18px">Выбрать все</span>
<span class="t" style="left:556.20px;top:628px;font-size:15px;line-height:15px;color:#8a8a8a;z-index:12;letter-spacing:0.36px">Ctrl+A</span>
<span class="t" style="left:185.60px;top:668px;font-size:15px;line-height:15px;color:#1f1f1f;z-index:12;letter-spacing:0.06px">Поделиться сервером</span>
<span class="t" style="left:558.40px;top:668px;font-size:15px;line-height:15px;color:#8a8a8a;z-index:12;letter-spacing:0.12px">Ctrl+F</span>
<span class="t" style="left:185.60px;top:703px;font-size:15px;line-height:15px;color:#1f1f1f;z-index:12;letter-spacing:0.21px">Экспортировать конфигурацию</span>
<svg class="a" style="left:611px;top:703.5px;z-index:12" width="10" height="14" viewBox="0 0 10 14" fill="none" stroke="#666a6f" stroke-width="2.1" stroke-linecap="round" stroke-linejoin="round"><path d="M3.5 2.3 L8.1 6.85 L3.5 11.4"/></svg>
<span class="t" style="left:185.60px;top:743px;font-size:15px;line-height:15px;color:#1f1f1f;z-index:12;letter-spacing:0.08px">Generate Policy Group from Multiple Profiles</span>
<svg class="a" style="left:611px;top:743.5px;z-index:12" width="10" height="14" viewBox="0 0 10 14" fill="none" stroke="#666a6f" stroke-width="2.1" stroke-linecap="round" stroke-linejoin="round"><path d="M3.5 2.3 L8.1 6.85 L3.5 11.4"/></svg>
<div class="a" style="left:177.9px;top:185.9px;width:271.1px;height:44.1px;box-sizing:border-box;border:6px solid #ff0000;z-index:20"></div>
<div class="a" style="left:174.0px;top:359.2px;width:381.9px;height:45.4px;box-sizing:border-box;border:6px solid #ff0000;z-index:20"></div>
<div class="a" style="left:1037.9px;top:127.1px;width:130.1px;height:148.2px;box-sizing:border-box;border:6px solid #ff0000;z-index:20"></div>
<div class="a" style="left:150.5px;top:192.7px;width:34.0px;height:34.0px;border-radius:50%;background:#04f28a;z-index:21"></div>
<div class="a" style="left:144.5px;top:367.7px;width:34.0px;height:34.0px;border-radius:50%;background:#04f28a;z-index:21"></div>
<div class="a" style="left:1007.5px;top:116.7px;width:34.0px;height:34.0px;border-radius:50%;background:#04f28a;z-index:21"></div>
<span class="t" style="left:162.90px;top:199px;font-size:19.5px;line-height:19.5px;color:#fff;font-weight:bold;z-index:22;transform:scaleX(0.9100);transform-origin:0 50%">3</span>
<span class="t" style="left:156.74px;top:374px;font-size:19.5px;line-height:19.5px;color:#fff;font-weight:bold;z-index:22;transform:scaleX(0.7556);transform-origin:0 50%">1</span>
<span class="t" style="left:1018.90px;top:123px;font-size:19.5px;line-height:19.5px;color:#fff;font-weight:bold;z-index:22;letter-spacing:0.40px">2</span>
</div></body></html>
